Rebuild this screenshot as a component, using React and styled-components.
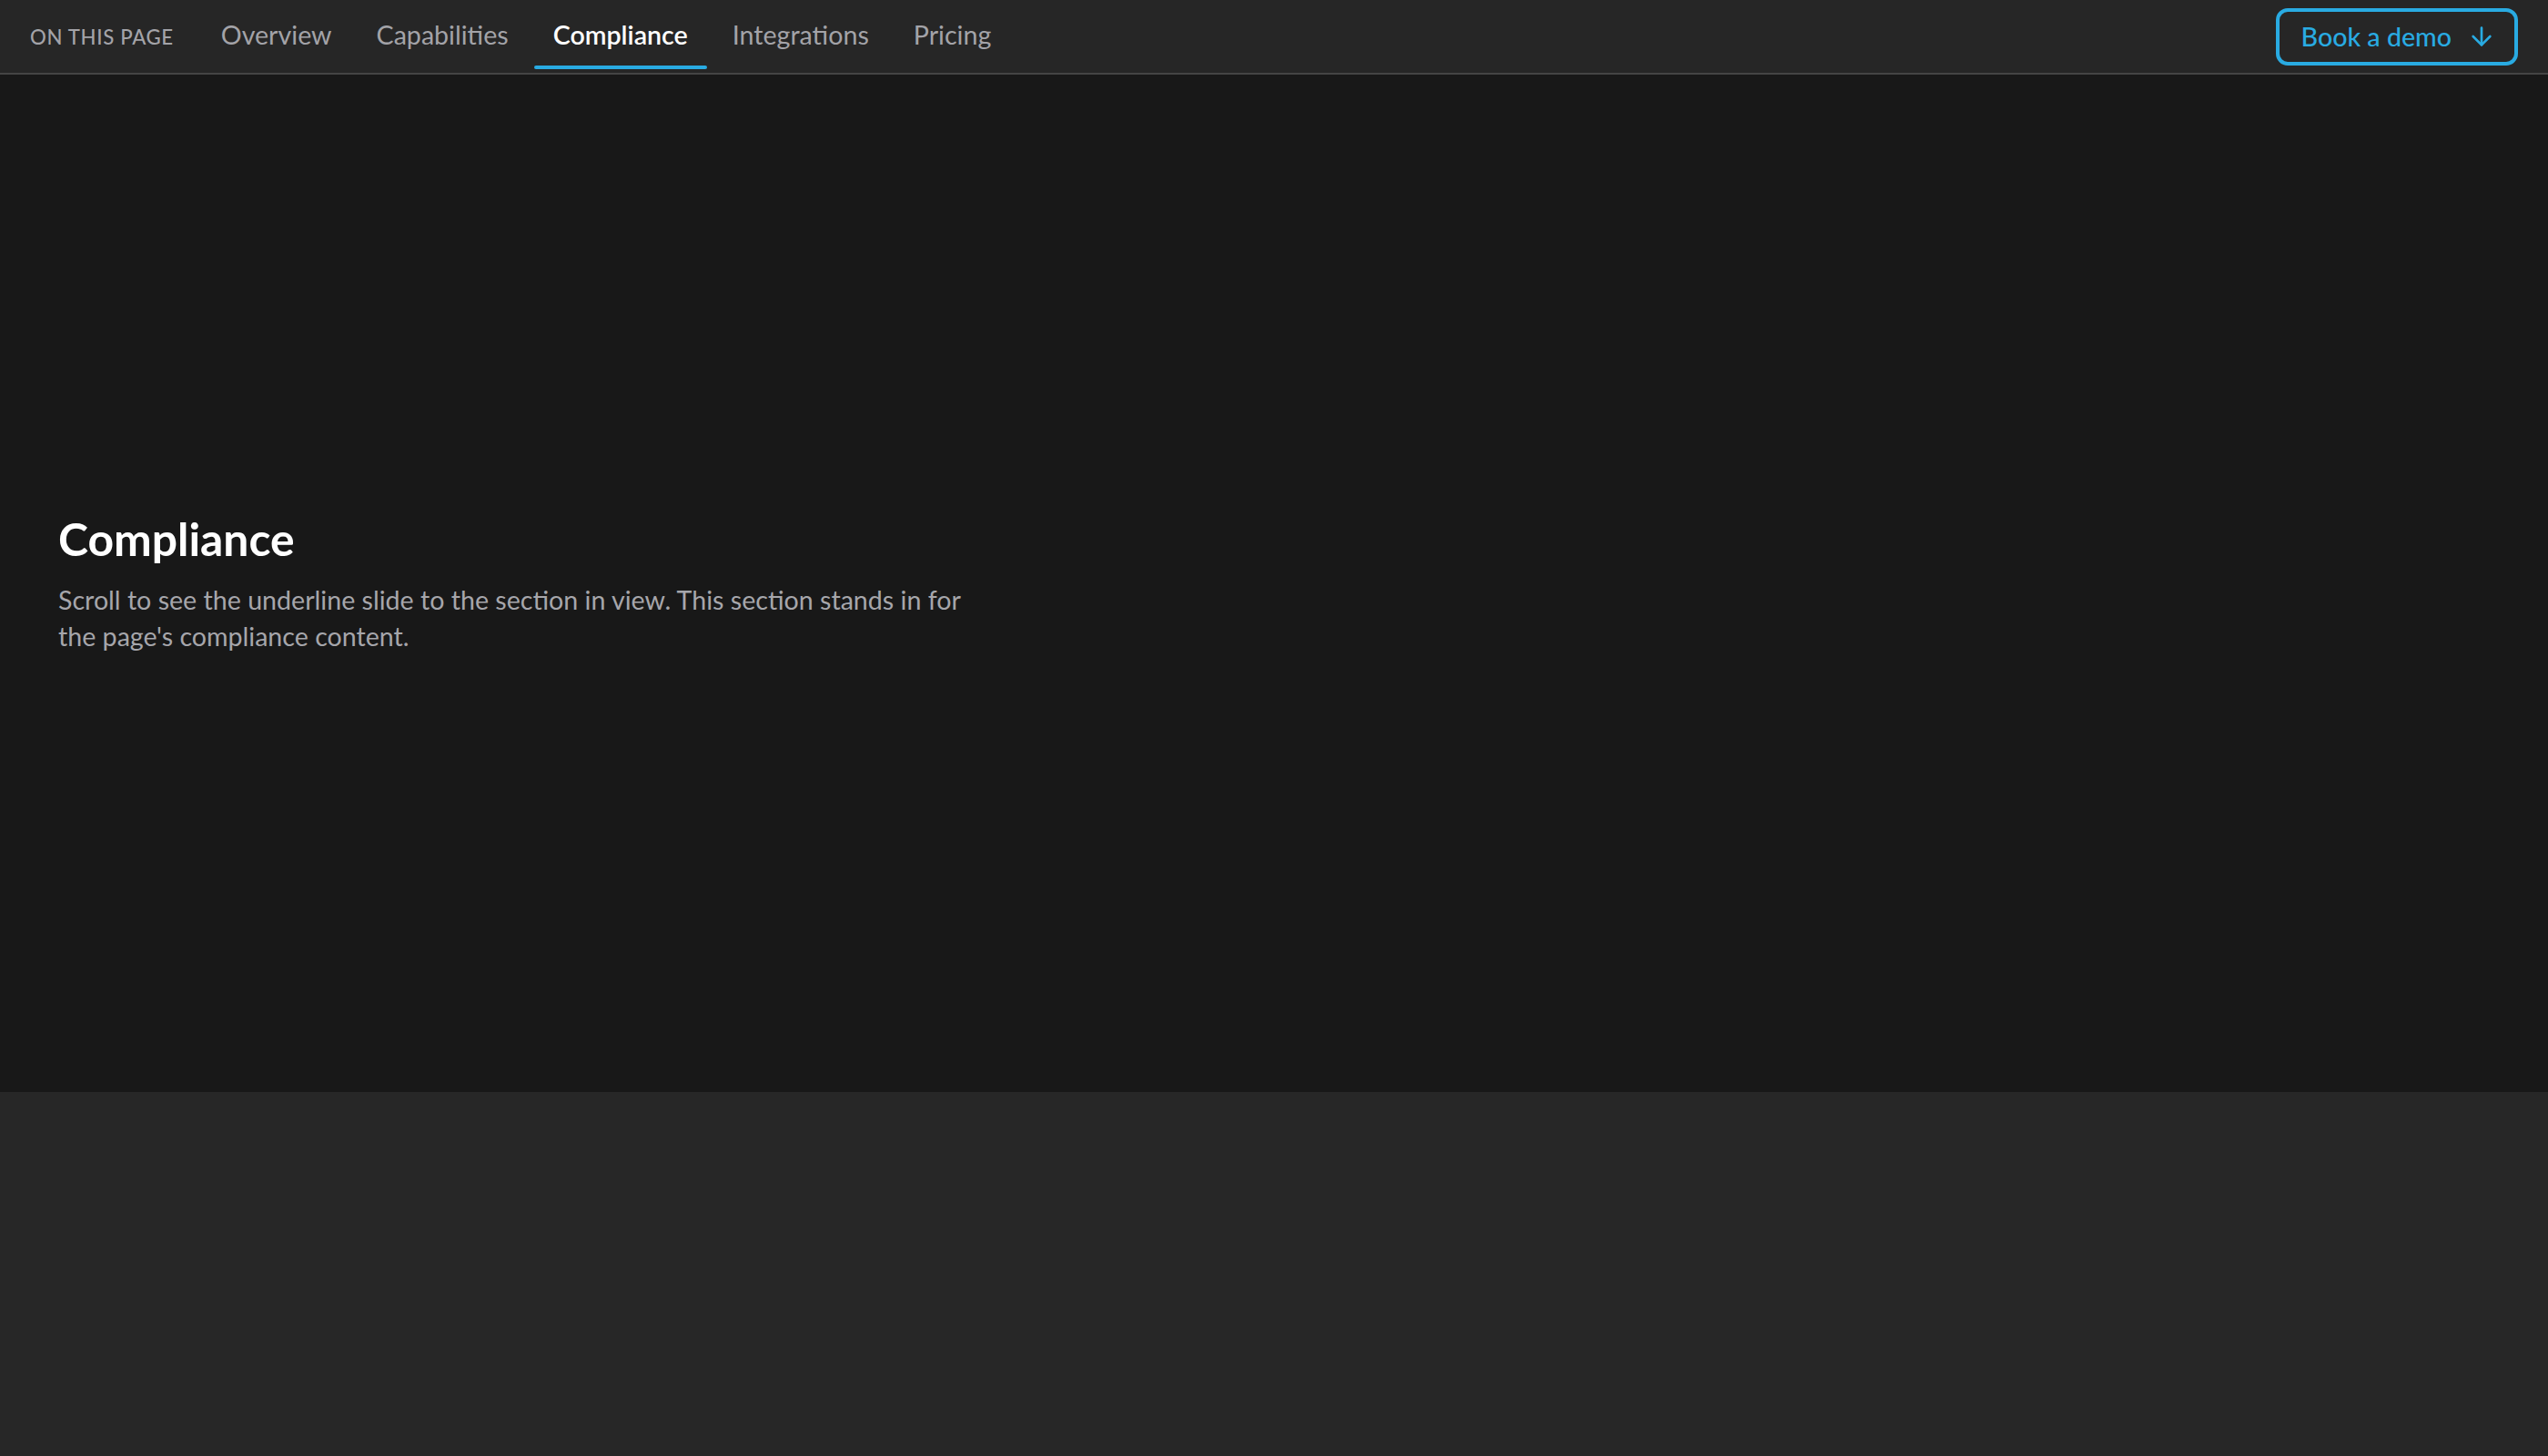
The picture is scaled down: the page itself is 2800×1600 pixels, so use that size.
import React from "react";
import styled, { createGlobalStyle } from "styled-components";

const Global = createGlobalStyle`
  html, body { margin: 0; padding: 0; background: #272727; }
  body { font-family: "Lato", "Noto Sans", sans-serif; -webkit-font-smoothing: antialiased; }
  * { box-sizing: border-box; }
`;

const Page = styled.div`
  min-height: 1600px;
  background: #272727;
`;

const Nav = styled.nav`
  height: 82px;
  background: #262626;
  border-bottom: 2px solid #444444;
  display: flex;
  align-items: center;
  padding: 0 33px;
`;

const Label = styled.span`
  font-size: 22.2px;
  font-weight: 500;
  letter-spacing: 0.03em;
  color: #a3a3a8;
  text-transform: uppercase;
  margin-right: 31px;
`;

const Links = styled.ul`
  list-style: none;
  display: flex;
  gap: 7px;
  margin: 0;
  padding: 0;
  height: 80px;
`;

const LinkItem = styled.li`
  position: relative;
  display: flex;
  align-items: center;
  padding: 0 21px 4px;
  font-size: 28.6px;
  font-weight: ${(p) => (p.$active ? 600 : 400)};
  color: ${(p) => (p.$active ? "#ffffff" : "#a3a3a8")};
  cursor: pointer;

  &::after {
    content: "";
    display: ${(p) => (p.$active ? "block" : "none")};
    position: absolute;
    left: 0;
    right: 0;
    bottom: 4px;
    height: 4px;
    border-radius: 2px;
    background: #29abe2;
  }
`;

const Spacer = styled.div`
  flex: 1;
`;

const DemoButton = styled.button`
  display: flex;
  align-items: center;
  gap: 17px;
  height: 63px;
  padding: 0 20px 0 24px;
  border: 4px solid #29abe2;
  border-radius: 13px;
  background: transparent;
  color: #29abe2;
  font-family: inherit;
  font-size: 28.6px;
  font-weight: 500;
  cursor: pointer;
`;

const Section = styled.section`
  height: 1118px;
  background: #181818;
  display: flex;
  flex-direction: column;
  justify-content: center;
  padding: 0 64px;
`;

const Heading = styled.h2`
  margin: 0 0 16px;
  font-size: 49.8px;
  font-weight: 700;
  line-height: 1.2;
  color: #ffffff;
`;

const Body = styled.p`
  margin: 0;
  max-width: 1020px;
  font-size: 28.6px;
  line-height: 40px;
  color: #a6a6ab;
`;

const ArrowDown = () => (
  <svg width="32" height="32" viewBox="0 0 24 24" fill="none" stroke="currentColor" strokeWidth="2" strokeLinecap="round" strokeLinejoin="round">
    <path d="M12 5v14" />
    <path d="m19 12-7 7-7-7" />
  </svg>
);

const links = ["Overview", "Capabilities", "Compliance", "Integrations", "Pricing"];

export default function App() {
  return (
    <Page>
      <Global />
      <Nav>
        <Label>On this page</Label>
        <Links>
          {links.map((l) => (
            <LinkItem key={l} $active={l === "Compliance"}>{l}</LinkItem>
          ))}
        </Links>
        <Spacer />
        <DemoButton>
          Book a demo
          <ArrowDown />
        </DemoButton>
      </Nav>
      <Section>
        <Heading>Compliance</Heading>
        <Body>
          Scroll to see the underline slide to the section in view. This section stands in for the page's compliance content.
        </Body>
      </Section>
    </Page>
  );
}
